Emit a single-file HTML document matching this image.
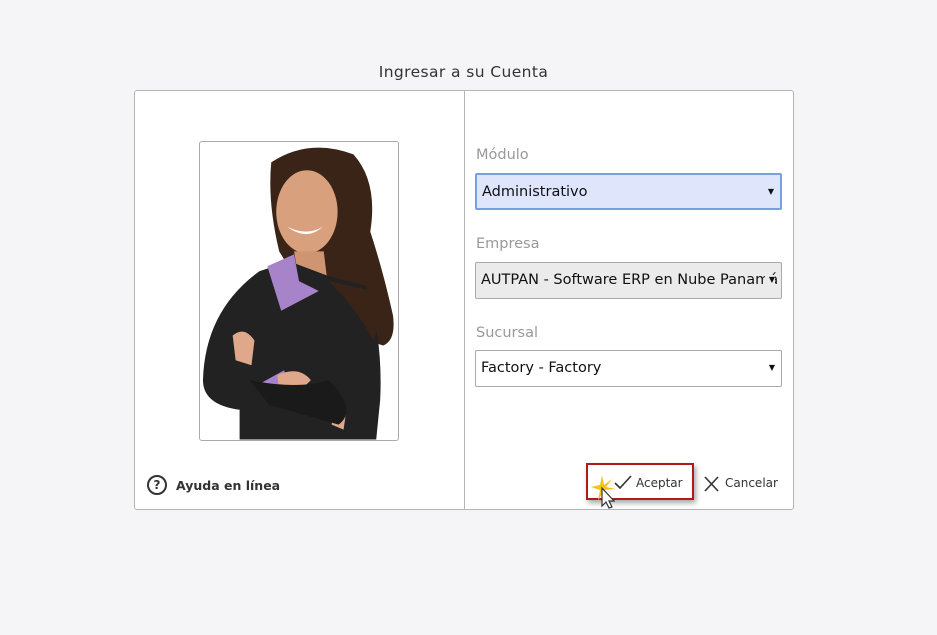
<!DOCTYPE html>
<html><head><meta charset="utf-8"><style>
body{margin:0;width:937px;height:635px;background:#f5f5f7;font-family:"DejaVu Sans","Liberation Sans",sans-serif;position:relative;overflow:hidden}
.title{position:absolute;left:0;width:927px;top:63px;text-align:center;font-size:15.5px;color:#333;letter-spacing:.4px}
.dlg{position:absolute;left:134px;top:90px;width:658px;height:418px;background:#fff;border:1px solid #b5b5b5;border-radius:3px}
.div{position:absolute;left:329px;top:0;width:1px;height:418px;background:#b5b5b5}
.photo{position:absolute;left:64px;top:50px;width:198px;height:298px;border:1px solid #aaa;border-radius:3px;overflow:hidden;background:#fff}
.lbl{position:absolute;left:341px;font-size:14.5px;color:#999}
.sel{position:absolute;left:340px;width:307px;height:37px;border:1px solid #aaa;border-radius:2px;font-size:14.5px;color:#111;box-sizing:border-box;padding:9px 0 0 5px;white-space:nowrap;overflow:hidden}
.sel:after{content:"▼";position:absolute;right:6px;top:12px;font-size:8px;background:inherit;padding-left:4px;padding-right:0}
.help{position:absolute;left:12px;top:384px;font-size:12.5px;font-weight:bold;color:#333;display:flex;align-items:center}
.help span.q{width:16px;height:16px;border:2px solid #333;border-radius:50%;display:inline-block;text-align:center;font-size:12px;line-height:16px;margin-right:9px}
.acc{position:absolute;left:451px;top:372px;width:108px;height:37px;border:2px solid #b01a1a;box-sizing:border-box;box-shadow:2px 3px 5px rgba(0,0,0,.35);font-size:12px;color:#333}
.can{position:absolute;left:568px;top:385px;font-size:12px;color:#333}
</style></head><body>
<div class="title">Ingresar a su Cuenta</div>
<div class="dlg">
<div class="div"></div>
<div class="photo"><svg width="198" height="298" viewBox="0 0 200 300">
<path d="M72 20 Q110 -5 155 12 Q180 40 172 90 Q185 130 195 175 Q198 200 185 205 Q150 195 120 175 L80 110 Q68 60 72 20Z" fill="#3a2418"/>
<ellipse cx="108" cy="70" rx="31" ry="42" fill="#d9a07e"/>
<path d="M95 110 L125 110 L128 135 L100 140Z" fill="#cf9572"/>
<path d="M3 240 Q5 170 60 130 L90 120 L130 135 L168 145 Q185 200 182 260 L178 300 L40 300 L40 270 Q3 265 3 240Z" fill="#222"/>
<path d="M130 140 Q160 170 175 200 Q185 175 175 150 Z" fill="#3a2418"/>
<path d="M68 125 L95 113 L100 140 L120 150 L82 170 Z" fill="#a784c9"/>
<path d="M58 245 L85 230 L90 250 L65 255Z" fill="#a784c9"/>
<path d="M33 195 Q45 185 55 200 L52 225 L36 220Z" fill="#e0a88a"/>
<path d="M78 235 Q100 225 112 240 L100 252 L80 250Z" fill="#e0a88a"/>
<path d="M135 265 L148 270 L145 290 L133 285Z" fill="#e0a88a"/>
<path d="M50 240 Q100 250 130 240 Q160 270 140 285 L70 265Z" fill="#1a1a1a"/>
<path d="M88 85 Q108 100 124 85 Q108 95 88 85Z" fill="#fff"/>
</svg></div>
<div class="lbl" style="top:56px">Módulo</div>
<div class="sel" style="top:82px;background:#dfe6fc;border:2px solid #7a9fe0">Administrativo</div>
<div class="lbl" style="top:145px">Empresa</div>
<div class="sel" style="top:171px;background:#ebebeb">AUTPAN - Software ERP en Nube Panamá</div>
<div class="lbl" style="top:234px">Sucursal</div>
<div class="sel" style="top:259px;background:#fff">Factory - Factory</div>
<div class="help"><span class="q">?</span>Ayuda en línea</div>
<div class="acc"><svg style="position:absolute;left:26px;top:10px" width="18" height="14"><path d="M1 8 L6 13 L17 1" stroke="#333" stroke-width="1.6" fill="none"/></svg>
<svg style="position:absolute;left:2px;top:8px" width="30" height="36"><path d="M12 2 L14 12 L22 6 L16 14 L26 16 L15 17 L20 26 L13 19 L8 28 L10 17 L1 14 L10 12Z" fill="#f3c21b"/><path d="M12 15 L12 33 L16 29 L19 35 L22 34 L19 28 L24 28Z" fill="#fff" stroke="#333" stroke-width="1.2"/></svg>
<span style="position:absolute;left:48px;top:11px">Aceptar</span></div>
<div class="can"><svg style="position:absolute;left:0;top:0" width="16" height="16"><path d="M2 1 L15 15 M15 1 L2 15" stroke="#333" stroke-width="1.6"/></svg><span style="margin-left:22px">Cancelar</span></div>
</div>
</body></html>
